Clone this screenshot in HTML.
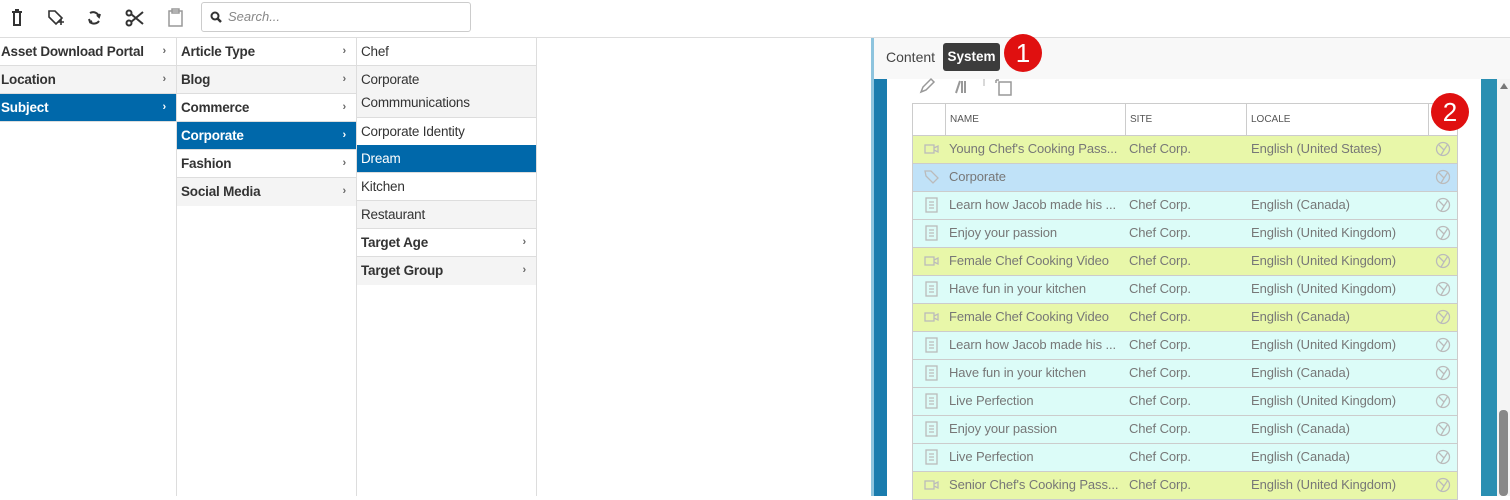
<!DOCTYPE html>
<html><head><style>
*{box-sizing:border-box;margin:0;padding:0}
body{width:1510px;height:496px;overflow:hidden;background:#fff;font-family:"Liberation Sans",sans-serif;position:relative;color:#333}
.a{position:absolute}
.col{position:absolute;top:38px;border-right:1px solid #ddd;height:458px}
.r{position:absolute;left:0;right:0;height:28px;border-bottom:1px solid #ddd;font-size:13.5px;padding-left:4px;line-height:27px;letter-spacing:-0.2px}
.b{font-weight:bold}
.g{background:#f4f4f4}
.s{background:#0068aa;color:#fff}
.r .c{position:absolute;right:10px;top:0;font-size:11px;color:#666}
.s .c{color:#fff}
.tr{position:absolute;left:912px;width:546px;height:28px;border:1px solid #ccc;border-top:none;font-size:13px;color:#777;line-height:26px;letter-spacing:-0.1px}
.tr span{position:absolute}
.y{background:#e8f7a9}.bl{background:#c0e2f8}.cy{background:#dcfcf8}
.badge{position:absolute;width:38px;height:38px;border-radius:50%;background:#e01010;color:#fff;font-size:26px;text-align:center;line-height:38px}
</style></head><body>
<div class="a" style="left:0;top:37px;width:1510px;height:1px;background:#ddd"></div>
<svg class="a" style="left:8px;top:7px" width="180" height="22" viewBox="0 0 180 22" fill="none" stroke="#333" stroke-width="2">
<path d="M4 5h10M6 5v13h6V5M7 3h4"/>
<path d="M41 4h6l7 7-6 6-7-7z" stroke-width="1.6"/><path d="M50 15h6M53 12v6" stroke-width="1.6"/>
<path d="M82 6a6 6 0 0 1 9 4M91 14a6 6 0 0 1-9 1M89 8l2 2 1-3M84 14l-2 1-1-3" stroke-width="2"/>
<circle cx="121" cy="16" r="2.5"/><circle cx="121" cy="6" r="2.5"/><path d="M123 7l12 10M123 15l12-10"/>
<rect x="161" y="4" width="13" height="15" stroke="#999" stroke-width="1.5"/><rect x="164" y="2" width="7" height="4" stroke="#999" stroke-width="1.5"/>
</svg>
<div class="a" style="left:201px;top:2px;width:270px;height:30px;border:1px solid #ccc;border-radius:3px"></div>
<svg class="a" style="left:210px;top:11px" width="12" height="12"><circle cx="5" cy="5" r="3.5" stroke="#333" stroke-width="2" fill="none"/><path d="M7.5 7.5l3.5 3.5" stroke="#333" stroke-width="2.5"/></svg>
<div class="a" style="left:228px;top:9px;font-size:13px;color:#888;font-style:italic">Search...</div>

<div class="col" style="left:0;width:177px">
<div class="r b" style="top:0;padding-left:1px">Asset Download Portal<span class="c">›</span></div>
<div class="r b g" style="top:28px;padding-left:1px">Location<span class="c">›</span></div>
<div class="r b s" style="top:56px;padding-left:1px">Subject<span class="c">›</span></div>
</div>
<div class="col" style="left:177px;width:180px">
<div class="r b" style="top:0">Article Type<span class="c">›</span></div>
<div class="r b g" style="top:28px">Blog<span class="c">›</span></div>
<div class="r b" style="top:56px">Commerce<span class="c">›</span></div>
<div class="r b s" style="top:84px">Corporate<span class="c">›</span></div>
<div class="r b" style="top:112px">Fashion<span class="c">›</span></div>
<div class="r b g" style="top:140px;border-bottom:none">Social Media<span class="c">›</span></div>
</div>
<div class="col" style="left:357px;width:180px">
<div class="r" style="top:0">Chef</div>
<div class="r g" style="top:28px;height:52px;line-height:23px;padding-top:2px">Corporate<br>Commmunications</div>
<div class="r" style="top:80px">Corporate Identity</div>
<div class="r s" style="top:107px">Dream</div>
<div class="r" style="top:135px">Kitchen</div>
<div class="r g" style="top:163px">Restaurant</div>
<div class="r b" style="top:191px">Target Age<span class="c">›</span></div>
<div class="r b g" style="top:219px;border-bottom:none">Target Group<span class="c">›</span></div>
</div>

<div class="a" style="left:871px;top:38px;width:639px;height:458px;background:#fff"></div>
<div class="a" style="left:871px;top:38px;width:3px;height:458px;background:#8ec4de"></div>
<div class="a" style="left:874px;top:38px;width:636px;height:41px;background:#f8f8f8"></div>
<div class="a" style="left:886px;top:49px;font-size:14px;color:#444">Content</div>
<div class="a" style="left:943px;top:43px;width:57px;height:28px;background:#3c3c3c;border-radius:3px;color:#fff;font-weight:bold;font-size:13.5px;text-align:center;line-height:28px">System</div>
<div class="badge" style="left:1004px;top:34px">1</div>
<div class="a" style="left:874px;top:79px;width:13px;height:417px;background:#1a7cae"></div>
<div class="a" style="left:1481px;top:79px;width:16px;height:417px;background:#2a8fb2"></div>
<div class="a" style="left:1497px;top:79px;width:13px;height:417px;background:#f4f4f4"></div>
<div class="a" style="left:1500px;top:83px;width:0;height:0;border:4px solid transparent;border-bottom:6px solid #777;border-top:0"></div>
<div class="a" style="left:1499px;top:410px;width:9px;height:86px;background:#888;border-radius:4px"></div>
<svg class="a" style="left:918px;top:76px" width="100" height="20" fill="none" stroke="#999" stroke-width="1.5">
<path d="M3 16l2-5 8-8 3 3-8 8z"/>
<path d="M38 17l4-12M44 5v12M47 5v12" stroke-width="2"/>
<path d="M66 3v7" stroke="#ccc"/><path d="M78 4v3M78 4h3"/><rect x="81" y="6" width="12" height="13"/>
</svg>
<div class="a" style="left:912px;top:103px;width:546px;height:33px;border:1px solid #ccc;background:#fff;font-size:10px;color:#555">
<span class="a" style="left:32px;top:0;height:31px;border-left:1px solid #ccc"></span>
<span class="a" style="left:212px;top:0;height:31px;border-left:1px solid #ccc"></span>
<span class="a" style="left:333px;top:0;height:31px;border-left:1px solid #ccc"></span>
<span class="a" style="left:515px;top:0;height:31px;border-left:1px solid #ccc"></span>
<span class="a" style="left:37px;top:10px">NAME</span><span class="a" style="left:217px;top:10px">SITE</span><span class="a" style="left:338px;top:10px">LOCALE</span>
</div>
<div class="badge" style="left:1431px;top:93px">2</div>
<div id="rows"></div>
<script>
var d=[["y","v","Young Chef's Cooking Pass...","Chef Corp.","English (United States)"],["bl","t","Corporate","",""],["cy","d","Learn how Jacob made his ...","Chef Corp.","English (Canada)"],["cy","d","Enjoy your passion","Chef Corp.","English (United Kingdom)"],["y","v","Female Chef Cooking Video","Chef Corp.","English (United Kingdom)"],["cy","d","Have fun in your kitchen","Chef Corp.","English (United Kingdom)"],["y","v","Female Chef Cooking Video","Chef Corp.","English (Canada)"],["cy","d","Learn how Jacob made his ...","Chef Corp.","English (United Kingdom)"],["cy","d","Have fun in your kitchen","Chef Corp.","English (Canada)"],["cy","d","Live Perfection","Chef Corp.","English (United Kingdom)"],["cy","d","Enjoy your passion","Chef Corp.","English (Canada)"],["cy","d","Live Perfection","Chef Corp.","English (Canada)"],["y","v","Senior Chef's Cooking Pass...","Chef Corp.","English (United Kingdom)"]];
var ic={v:'<rect x="2" y="5" width="9" height="8" /><path d="M11 8l4-2v6l-4-2"/>',t:'<path d="M2 3h6l7 7-5 5-7-7z"/>',d:'<rect x="3" y="2" width="11" height="14"/><path d="M6 6h5M6 9h5M6 12h5"/>'};
var h='';d.forEach(function(r,i){h+='<div class="tr '+r[0]+'" style="top:'+(136+i*28)+'px"><svg class="a" style="left:10px;top:4px" width="18" height="18" fill="none" stroke="#bbb" stroke-width="1.3">'+ic[r[1]]+'</svg><span style="left:36px">'+r[2]+'</span><span style="left:216px">'+r[3]+'</span><span style="left:338px">'+r[4]+'</span><svg class="a" style="left:522px;top:5px" width="16" height="16" fill="none" stroke="#bbb" stroke-width="1.3"><circle cx="8" cy="8" r="6.5"/><path d="M4 4l5 5 4-6M9 9l-3 5"/></svg></div>'});
document.getElementById('rows').innerHTML=h;
</script>
</body></html>
